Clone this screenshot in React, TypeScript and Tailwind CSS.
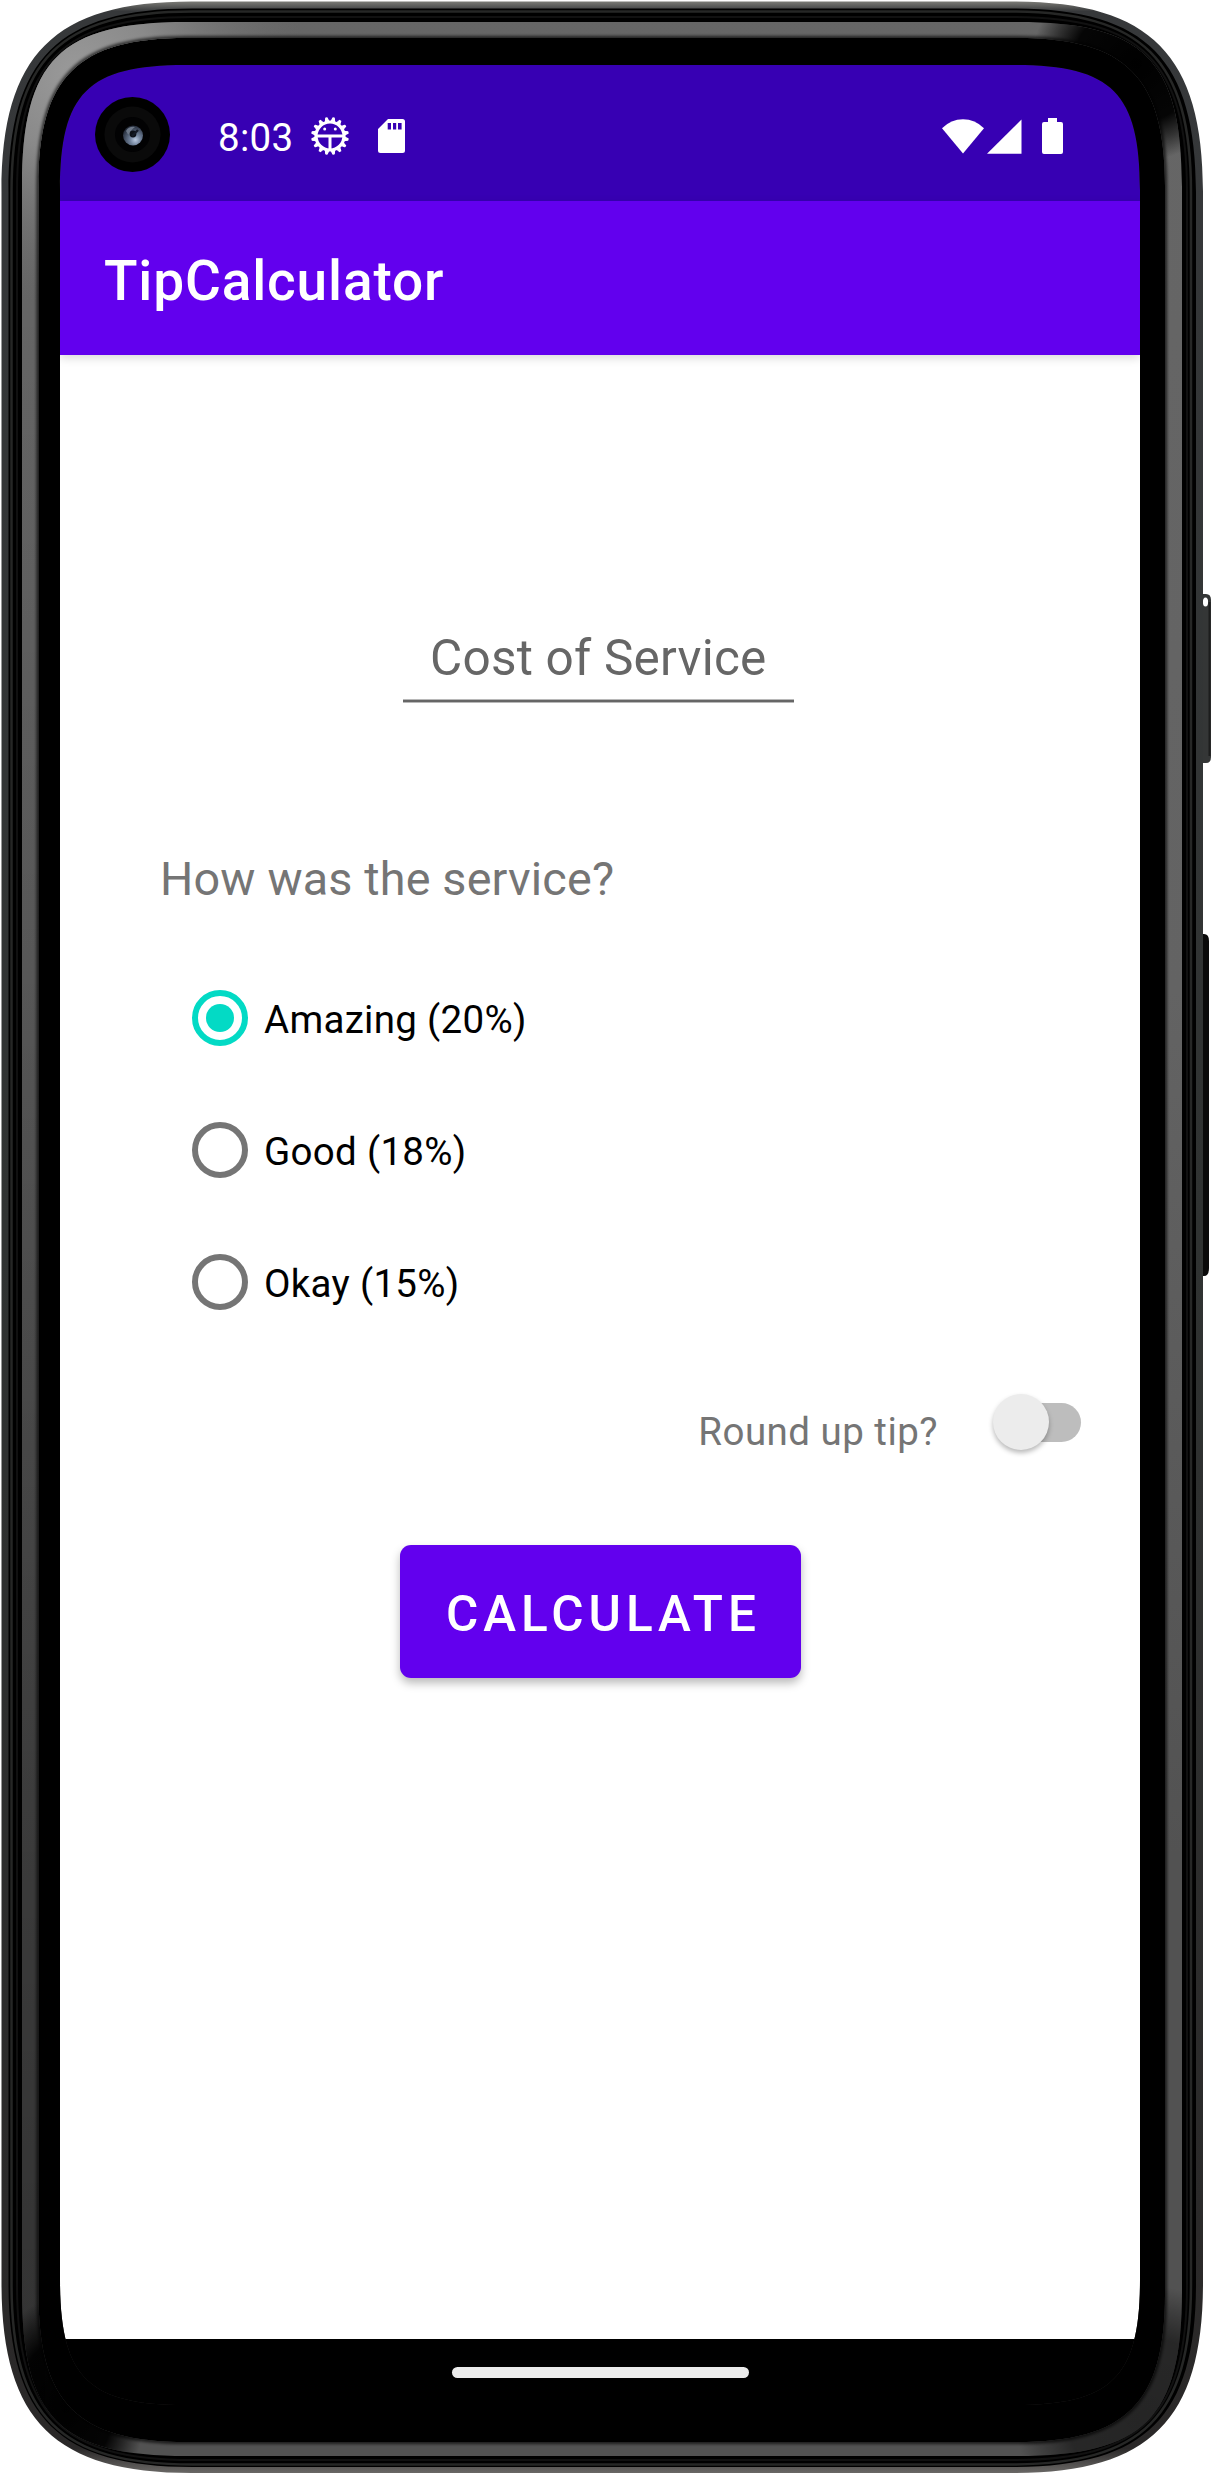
import { useState } from 'react';

/** Closed outline of a rectangle with continuous-curvature corners. */
function squircle(l: number, t: number, r: number, b: number, R: number, c: number) {
  return (
    `M${l + R} ${t}H${r - R}C${r - c} ${t} ${r} ${t + c} ${r} ${t + R}` +
    `V${b - R}C${r} ${b - c} ${r - c} ${b} ${r - R} ${b}` +
    `H${l + R}C${l + c} ${b} ${l} ${b - c} ${l} ${b - R}` +
    `V${t + R}C${l} ${t + c} ${l + c} ${t} ${l + R} ${t}Z`
  );
}

const screenHole = squircle(60, 65, 1140, 2405, 125, 28);
const bandInner = squircle(38.5, 38, 1165, 2442, 148, 39);

function PhoneFrame() {
  return (
    <svg className="pointer-events-none absolute inset-0" width="1211" height="2474" viewBox="0 0 1211 2474" fillRule="evenodd" aria-hidden="true">
      <defs>
        <linearGradient id="rim" x1="0" y1="0" x2="0" y2="1">
          <stop offset="0" stopColor="#7b7b76" />
          <stop offset="0.004" stopColor="#36383a" />
          <stop offset="0.5" stopColor="#303332" />
          <stop offset="0.99" stopColor="#2a2828" />
          <stop offset="1" stopColor="#6a6866" />
        </linearGradient>
        <linearGradient id="band" gradientUnits="userSpaceOnUse" x1="0" y1="0" x2="0" y2="2474">
          <stop offset="0" stopColor="#666" />
          <stop offset="0.4" stopColor="#636363" />
          <stop offset="0.75" stopColor="#525252" />
          <stop offset="1" stopColor="#525252" />
        </linearGradient>
        <radialGradient id="shine" gradientUnits="userSpaceOnUse" cx="75" cy="75" r="230">
          <stop offset="0" stopColor="#9a9a9a" />
          <stop offset="0.35" stopColor="#909090" stopOpacity="0.85" />
          <stop offset="1" stopColor="#707070" stopOpacity="0" />
        </radialGradient>
        <radialGradient id="dark">
          <stop offset="0" stopColor="#000" />
          <stop offset="0.6" stopColor="#000" stopOpacity="0.95" />
          <stop offset="0.8" stopColor="#000" stopOpacity="0.5" />
          <stop offset="1" stopColor="#000" stopOpacity="0" />
        </radialGradient>
        <linearGradient id="leftDim" gradientUnits="userSpaceOnUse" x1="0" y1="300" x2="0" y2="2250">
          <stop offset="0" stopColor="#000" stopOpacity="0" />
          <stop offset="1" stopColor="#000" stopOpacity="0.36" />
        </linearGradient>
        <clipPath id="bandClip">
          <path clipRule="evenodd" d={squircle(22, 22, 1182, 2456, 165, 38) + bandInner} />
        </clipPath>
        <filter id="soft" filterUnits="userSpaceOnUse" x="0" y="0" width="1211" height="2474">
          <feGaussianBlur stdDeviation="1.6" />
        </filter>
      </defs>

      <path fill="#343636" d="M1198 594H1206Q1211 594 1211 600V757Q1211 763 1206 763H1198Z" />
      <ellipse cx="1205.5" cy="602" rx="2.6" ry="4.5" fill="#fff" />
      <path d="M1209.5 602V756" stroke="#1c1d1d" strokeWidth="2" />
      <path fill="#0a0a0a" d="M1198 934H1204Q1209 934 1209 941V1268Q1209 1276 1204 1276H1198Z" />

      <path fill="url(#rim)" d={squircle(1.5, 1.5, 1203, 2473, 190, 53) + screenHole} />
      <path fill="#000" d={squircle(8.5, 8.5, 1196, 2467, 184, 50) + screenHole} />
      <path fill="none" stroke="#262726" strokeWidth="2.5" d={squircle(11.5, 11.5, 1191, 2464.5, 181, 48)} />
      <path fill="none" stroke="#111" strokeWidth="2" d={squircle(17, 17, 1187, 2460, 175, 45)} />

      <g clipPath="url(#bandClip)">
        <rect width="1211" height="2474" fill="url(#band)" />
        <rect width="310" height="310" fill="url(#shine)" />
        <rect y="300" width="45" height="2174" fill="url(#leftDim)" />
        <ellipse cx="1136" cy="64" rx="105" ry="98" fill="url(#dark)" />
        <ellipse cx="66" cy="2405" rx="80" ry="110" fill="url(#dark)" />
        <ellipse cx="1145" cy="2415" rx="130" ry="130" fill="url(#dark)" opacity="0.55" />
        <path filter="url(#soft)" fill="none" stroke="#000" strokeOpacity="0.7" strokeWidth="4" d={bandInner} />
      </g>
    </svg>
  );
}

function Camera() {
  return (
    <svg className="block h-[75px] w-[75px]" viewBox="0 0 75 75" aria-hidden="true">
      <defs>
        <radialGradient id="lens" cx="0.62" cy="0.72" r="0.75">
          <stop offset="0" stopColor="#b9c9e0" />
          <stop offset="0.35" stopColor="#71829b" />
          <stop offset="1" stopColor="#1d2330" />
        </radialGradient>
      </defs>
      <circle cx="37.5" cy="37.5" r="37.5" fill="#000" />
      <circle cx="37.5" cy="37.5" r="28" fill="#0a0a0a" />
      <circle cx="37.5" cy="37.5" r="17.5" fill="#020203" />
      <circle cx="38" cy="38.5" r="10" fill="url(#lens)" />
      <path d="M31 34q3-5 9-4-5 3-5 8-3-1-4-4z" fill="#6d7888" />
      <circle cx="38" cy="37" r="3.4" fill="#0c1018" />
      <path d="M37 39l6-6" stroke="#141925" strokeWidth="2.4" />
    </svg>
  );
}

const teeth = Array.from({ length: 16 }, (_, i) => i * 22.5 + 11.25);

function GearIcon() {
  return (
    <svg className="block h-[40px] w-[40px]" viewBox="-20 -20 40 40" fill="none" stroke="#fff" aria-hidden="true">
      <circle r="14" strokeWidth="3.2" />
      {teeth.map((a) => (
        <path key={a} transform={`rotate(${a})`} d="M-1.8-14.5L-.7-18.3H.7L1.8-14.5Z" fill="#fff" strokeWidth="1.2" strokeLinejoin="round" />
      ))}
      <path d="M-14 0H14M0 0V15" strokeWidth="3" />
      <circle cx="-5.3" cy="-7" r="1.5" fill="#fff" stroke="none" />
      <circle cx="5.3" cy="-7" r="1.5" fill="#fff" stroke="none" />
    </svg>
  );
}

function SdCardIcon() {
  return (
    <svg className="block h-[34px] w-[27px]" viewBox="0 0 27 34" aria-hidden="true">
      <path fill="#fff" fillRule="evenodd" d="M10 0H24.5Q27 0 27 2.5V31.5Q27 34 24.5 34H2.5Q0 34 0 31.5V10ZM9.7 4V10.5H13V4ZM15 4V10.5H18.2V4ZM20 4V10.5H23.6V4Z" />
    </svg>
  );
}

function WifiIcon() {
  return (
    <svg className="block h-[35px] w-[42px]" viewBox="0 0 42 35" aria-hidden="true">
      <path fill="#fff" d="M0 9.3Q9 0.3 21 .3T42 9.3L21 34.5Z" />
    </svg>
  );
}

function SignalIcon() {
  return (
    <svg className="block h-[35px] w-[35px]" viewBox="0 0 35 35" aria-hidden="true">
      <path fill="#fff" d="M0 34.8L34.5.5V34.8Z" />
    </svg>
  );
}

function BatteryIcon() {
  return (
    <svg className="block h-[36px] w-[21px]" viewBox="0 0 21 36" aria-hidden="true">
      <path fill="#fff" d="M6 0H15V4H19Q21 4 21 6V34Q21 36 19 36H2Q0 36 0 34V6Q0 4 2 4H6Z" />
    </svg>
  );
}

function StatusBar() {
  return (
    <div className="flex h-[136px] items-center bg-[#3700b3] pt-[6px] text-white">
      <div className="-mt-[4px] ml-[35px]"><Camera /></div>
      <span className="ml-[48px] pt-[3px] text-[38.5px] leading-[46px] tracking-[0.3px]">8:03</span>
      <div className="ml-[17px]"><GearIcon /></div>
      <div className="ml-[28px]"><SdCardIcon /></div>
      <div className="mr-[77px] ml-auto flex items-center">
        <WifiIcon />
        <div className="ml-[3px]"><SignalIcon /></div>
        <div className="ml-[20px]"><BatteryIcon /></div>
      </div>
    </div>
  );
}

const options = ['Amazing (20%)', 'Good (18%)', 'Okay (15%)'];

export default function App() {
  const [choice, setChoice] = useState(0);
  return (
    <div className="relative h-[2474px] w-[1211px] overflow-hidden bg-white font-[Roboto,sans-serif]">
      <div className="flex h-full flex-col pr-[71px] pl-[60px] pt-[65px]">
        <StatusBar />
        <header className="flex h-[154px] shrink-0 items-center bg-[#6200ee] pt-[6px] pl-[44px] shadow-[0_3px_9px_rgba(0,0,0,0.15)]">
          <h1 className="text-[55px] leading-[64px] font-medium tracking-[0.84px] text-white">TipCalculator</h1>
        </header>

        <main className="flex h-[1984px] shrink-0 flex-col">
          <div className="mt-[273px] ml-[343px] w-[391px]">
            <div className="pl-[27px] text-[49.5px] leading-[60px] tracking-[0.22px] whitespace-nowrap text-[#666]">Cost of Service</div>
            <div className="mt-[11px] h-[4px] border-y border-[#b8b8b8] bg-[#666]" />
          </div>

          <h2 className="mt-[146px] ml-[100px] text-[46.75px] leading-[60px] tracking-[0.16px] text-[#757575]">How was the service?</h2>

          <div className="mt-[43px] ml-[132px] flex flex-col">
            {options.map((label, i) => (
              <button key={label} onClick={() => setChoice(i)} className="flex h-[132px] items-center text-left">
                <span className={`flex h-[56px] w-[56px] items-center justify-center rounded-full border-[6px] ${choice === i ? 'border-[#03dac5]' : 'border-[#757575]'}`}>
                  {choice === i && <span className="h-[28px] w-[28px] rounded-full bg-[#03dac5]" />}
                </span>
                <span className="ml-[16px] pt-[3px] text-[38.5px] leading-[46px] tracking-[0.3px] text-black">{label}</span>
              </button>
            ))}
          </div>

          <div className="mt-[46px] mr-[59px] flex h-[56px] items-center justify-end">
            <span className="pt-[20px] text-[38.5px] leading-[46px] tracking-[0.47px] text-[#757575]">Round up tip?</span>
            <span className="ml-[55px] flex h-[56px] w-[88px] items-center">
              <span className="z-10 h-[56px] w-[56px] shrink-0 rounded-full bg-[#ececec] shadow-[0_3px_5px_rgba(0,0,0,0.28)]" />
              <span className="-ml-[36px] h-[39px] w-[68px] shrink-0 rounded-full bg-[#bdbdbd]" />
            </span>
          </div>

          <button className="mt-[95px] ml-[340px] h-[133px] w-[401px] rounded-[11px] bg-[#6200ee] pt-[4px] pl-[46px] text-left text-[49.5px] leading-[60px] font-medium tracking-[4.98px] text-white shadow-[0_5px_10px_rgba(0,0,0,0.28)]">
            CALCULATE
          </button>
        </main>

        <nav className="flex h-[66px] shrink-0 items-center justify-center bg-black">
          <div className="h-[11px] w-[297px] rounded-full bg-[#ececec]" />
        </nav>
      </div>
      <PhoneFrame />
    </div>
  );
}
